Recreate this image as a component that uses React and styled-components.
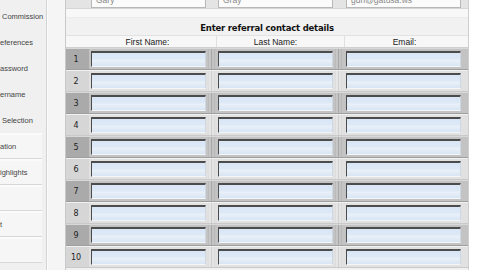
import React from "react";
import styled, { createGlobalStyle } from "styled-components";

const Global = createGlobalStyle`
  html, body { margin: 0; padding: 0; background: #ffffff; }
  body { font-family: "Liberation Sans", Arial, sans-serif; }
`;

const Page = styled.div`
  width: 480px;
  height: 270px;
  overflow: hidden;
  display: flex;
  background: #ffffff;
`;

const Sidebar = styled.nav`
  width: 47px;
  flex: none;
  background: #f0f0f0;
  border-right: 1px solid #d4d4d4;
  display: flex;
  flex-direction: column;
  overflow: hidden;
  padding-top: 3px;
  box-sizing: border-box;
`;

const NavItem = styled.div`
  height: 26px;
  flex: none;
  box-sizing: border-box;
  display: flex;
  align-items: center;
  font-size: 7.5px;
  color: #444;
  white-space: nowrap;
  padding-left: ${(p) => p.$indent}px;
  border-bottom: ${(p) => (p.$boxed ? "1px solid #d8d8d8" : "none")};
  border-top: ${(p) => (p.$boxed ? "2px solid #fbfbfb" : "none")};
  background: ${(p) => (p.$boxed ? "#f6f6f6" : "transparent")};
  margin-right: ${(p) => (p.$boxed ? "4px" : "0")};
`;

const Gutter = styled.div`
  width: 17px;
  flex: none;
  background: #f5f5f5;
  border-left: 1px solid #fbfbfb;
`;

const Panel = styled.main`
  width: 402px;
  flex: none;
  background: #f1f1f1;
  border-left: 1px solid #c9c9c9;
  border-right: 1px solid #cfcfcf;
  display: flex;
  flex-direction: column;
  overflow: hidden;
`;

const Right = styled.div`
  flex: 1;
  background: #ffffff;
`;

const Grid = styled.div`
  display: grid;
  grid-template-columns: 23px 127px 128px 124px;
`;

const PrevRow = styled(Grid)`
  height: 9px;
  flex: none;
  overflow: hidden;
  background: #e4e4e4;
  border-bottom: 1px solid #d6d6d6;
  box-sizing: border-box;
`;

const PrevInput = styled.div`
  height: 15px;
  margin-top: -7px;
  margin-left: 2px;
  width: 115px;
  box-sizing: border-box;
  background: #fbfbfb;
  border: 1px solid #b8b8b8;
  font-size: 8.5px;
  color: #8a8a8a;
  padding-left: 4px;
  line-height: 10px;
  padding-top: 1px;
`;

const Band = styled.div`
  height: 8px;
  flex: none;
  background: #f8f8f8;
  border-bottom: 1px solid #ececec;
`;

const Heading = styled.h2`
  margin: 0;
  height: 17px;
  flex: none;
  display: flex;
  align-items: flex-end;
  justify-content: center;
  font-size: 8.5px;
  font-weight: bold;
  color: #111;
  padding-bottom: 2px;
  box-sizing: border-box;
  font-family: "DejaVu Sans", sans-serif;
  letter-spacing: -0.2px;
`;

const HeaderRow = styled(Grid)`
  height: 11px;
  flex: none;
  background: #f7f7f7;
  border-top: 1px solid #e2e2e2;
  border-bottom: 1px solid #d0d0d0;
`;

const HeaderCell = styled.div`
  font-size: 8.5px;
  color: #222;
  display: flex;
  align-items: center;
  justify-content: center;
  border-left: ${(p) => (p.$divider ? "1px solid #e0e0e0" : "none")};
  padding-right: ${(p) => p.$trim}px;
  line-height: 10px;
`;

const Row = styled(Grid)`
  height: 22px;
  flex: none;
  box-sizing: border-box;
  background: ${(p) => (p.$odd ? "#c3c3c3" : "#e1e1e1")};
  border-top: 1px solid ${(p) => (p.$odd ? "#d9d9d9" : "#f0f0f0")};
  border-bottom: 1px solid ${(p) => (p.$odd ? "#9f9f9f" : "#c9c9c9")};
`;

const NumCell = styled.div`
  background: ${(p) => (p.$odd ? "#aaaaaa" : "#d6d6d6")};
  font-size: 8px;
  color: #222;
  display: flex;
  align-items: center;
  justify-content: center;
  padding-right: 3px;
  font-family: "DejaVu Sans", sans-serif;
`;

const Cell = styled.div`
  display: flex;
  align-items: center;
  padding-left: 2px;
`;

const Input = styled.input`
  width: 115px;
  height: 16px;
  box-sizing: border-box;
  border: none;
  border-top: 2px solid #4c4c4c;
  border-left: 1px solid #4c4c4c;
  border-right: 1px solid #cfd8e2;
  border-bottom: 1px solid #f4f7fa;
  background: linear-gradient(#d9e6f5 0%, #dde9f6 45%, #e9f0f8 55%, #d8e5f4 100%);
  padding: 0;
  margin: 0;
  outline: none;
`;

const Divider = styled.div`
  width: 7px;
  height: 100%;
  margin-left: 2px;
  background: ${(p) =>
    p.$odd
      ? "linear-gradient(90deg, #b3b3b3, #d0d0d0 30%, #a8a8a8 50%, #cdcdcd 70%, #b0b0b0)"
      : "linear-gradient(90deg, #d9d9d9, #ececec 30%, #d0d0d0 50%, #ebebeb 70%, #d6d6d6)"};
`;

const navItems = [
  { t: "Commission", i: 2 },
  { t: "eferences", i: 0 },
  { t: "assword", i: 0 },
  { t: "ername", i: 0 },
  { t: "Selection", i: 2 },
  { t: "ation", i: 0, boxed: true },
  { t: "ighlights", i: 0, boxed: true },
  { t: "", i: 0, boxed: true },
  { t: "t", i: 0, boxed: true },
  { t: "", i: 0, boxed: true },
];

export default function App() {
  const rows = Array.from({ length: 10 }, (_, i) => i + 1);
  return (
    <>
      <Global />
      <Page>
        <Sidebar>
          {navItems.map((n, i) => (
            <NavItem key={i} $indent={n.i} $boxed={n.boxed}>
              {n.t}
            </NavItem>
          ))}
        </Sidebar>
        <Gutter />
        <Panel>
          <PrevRow>
            <div />
            <PrevInput>Gary</PrevInput>
            <PrevInput>Gray</PrevInput>
            <PrevInput>gdh@gatusa.ws</PrevInput>
          </PrevRow>
          <Band />
          <Heading>Enter referral contact details</Heading>
          <HeaderRow>
            <div />
            <HeaderCell $trim={10}>First Name:</HeaderCell>
            <HeaderCell $divider $trim={10}>Last Name:</HeaderCell>
            <HeaderCell $divider $trim={4}>Email:</HeaderCell>
          </HeaderRow>
          {rows.map((n) => {
            const odd = n % 2 === 1;
            return (
              <Row key={n} $odd={odd}>
                <NumCell $odd={odd}>{n}</NumCell>
                <Cell>
                  <Input aria-label={`First name ${n}`} />
                  <Divider $odd={odd} />
                </Cell>
                <Cell>
                  <Input aria-label={`Last name ${n}`} />
                  <Divider $odd={odd} />
                </Cell>
                <Cell>
                  <Input aria-label={`Email ${n}`} />
                </Cell>
              </Row>
            );
          })}
        </Panel>
        <Right />
      </Page>
    </>
  );
}
